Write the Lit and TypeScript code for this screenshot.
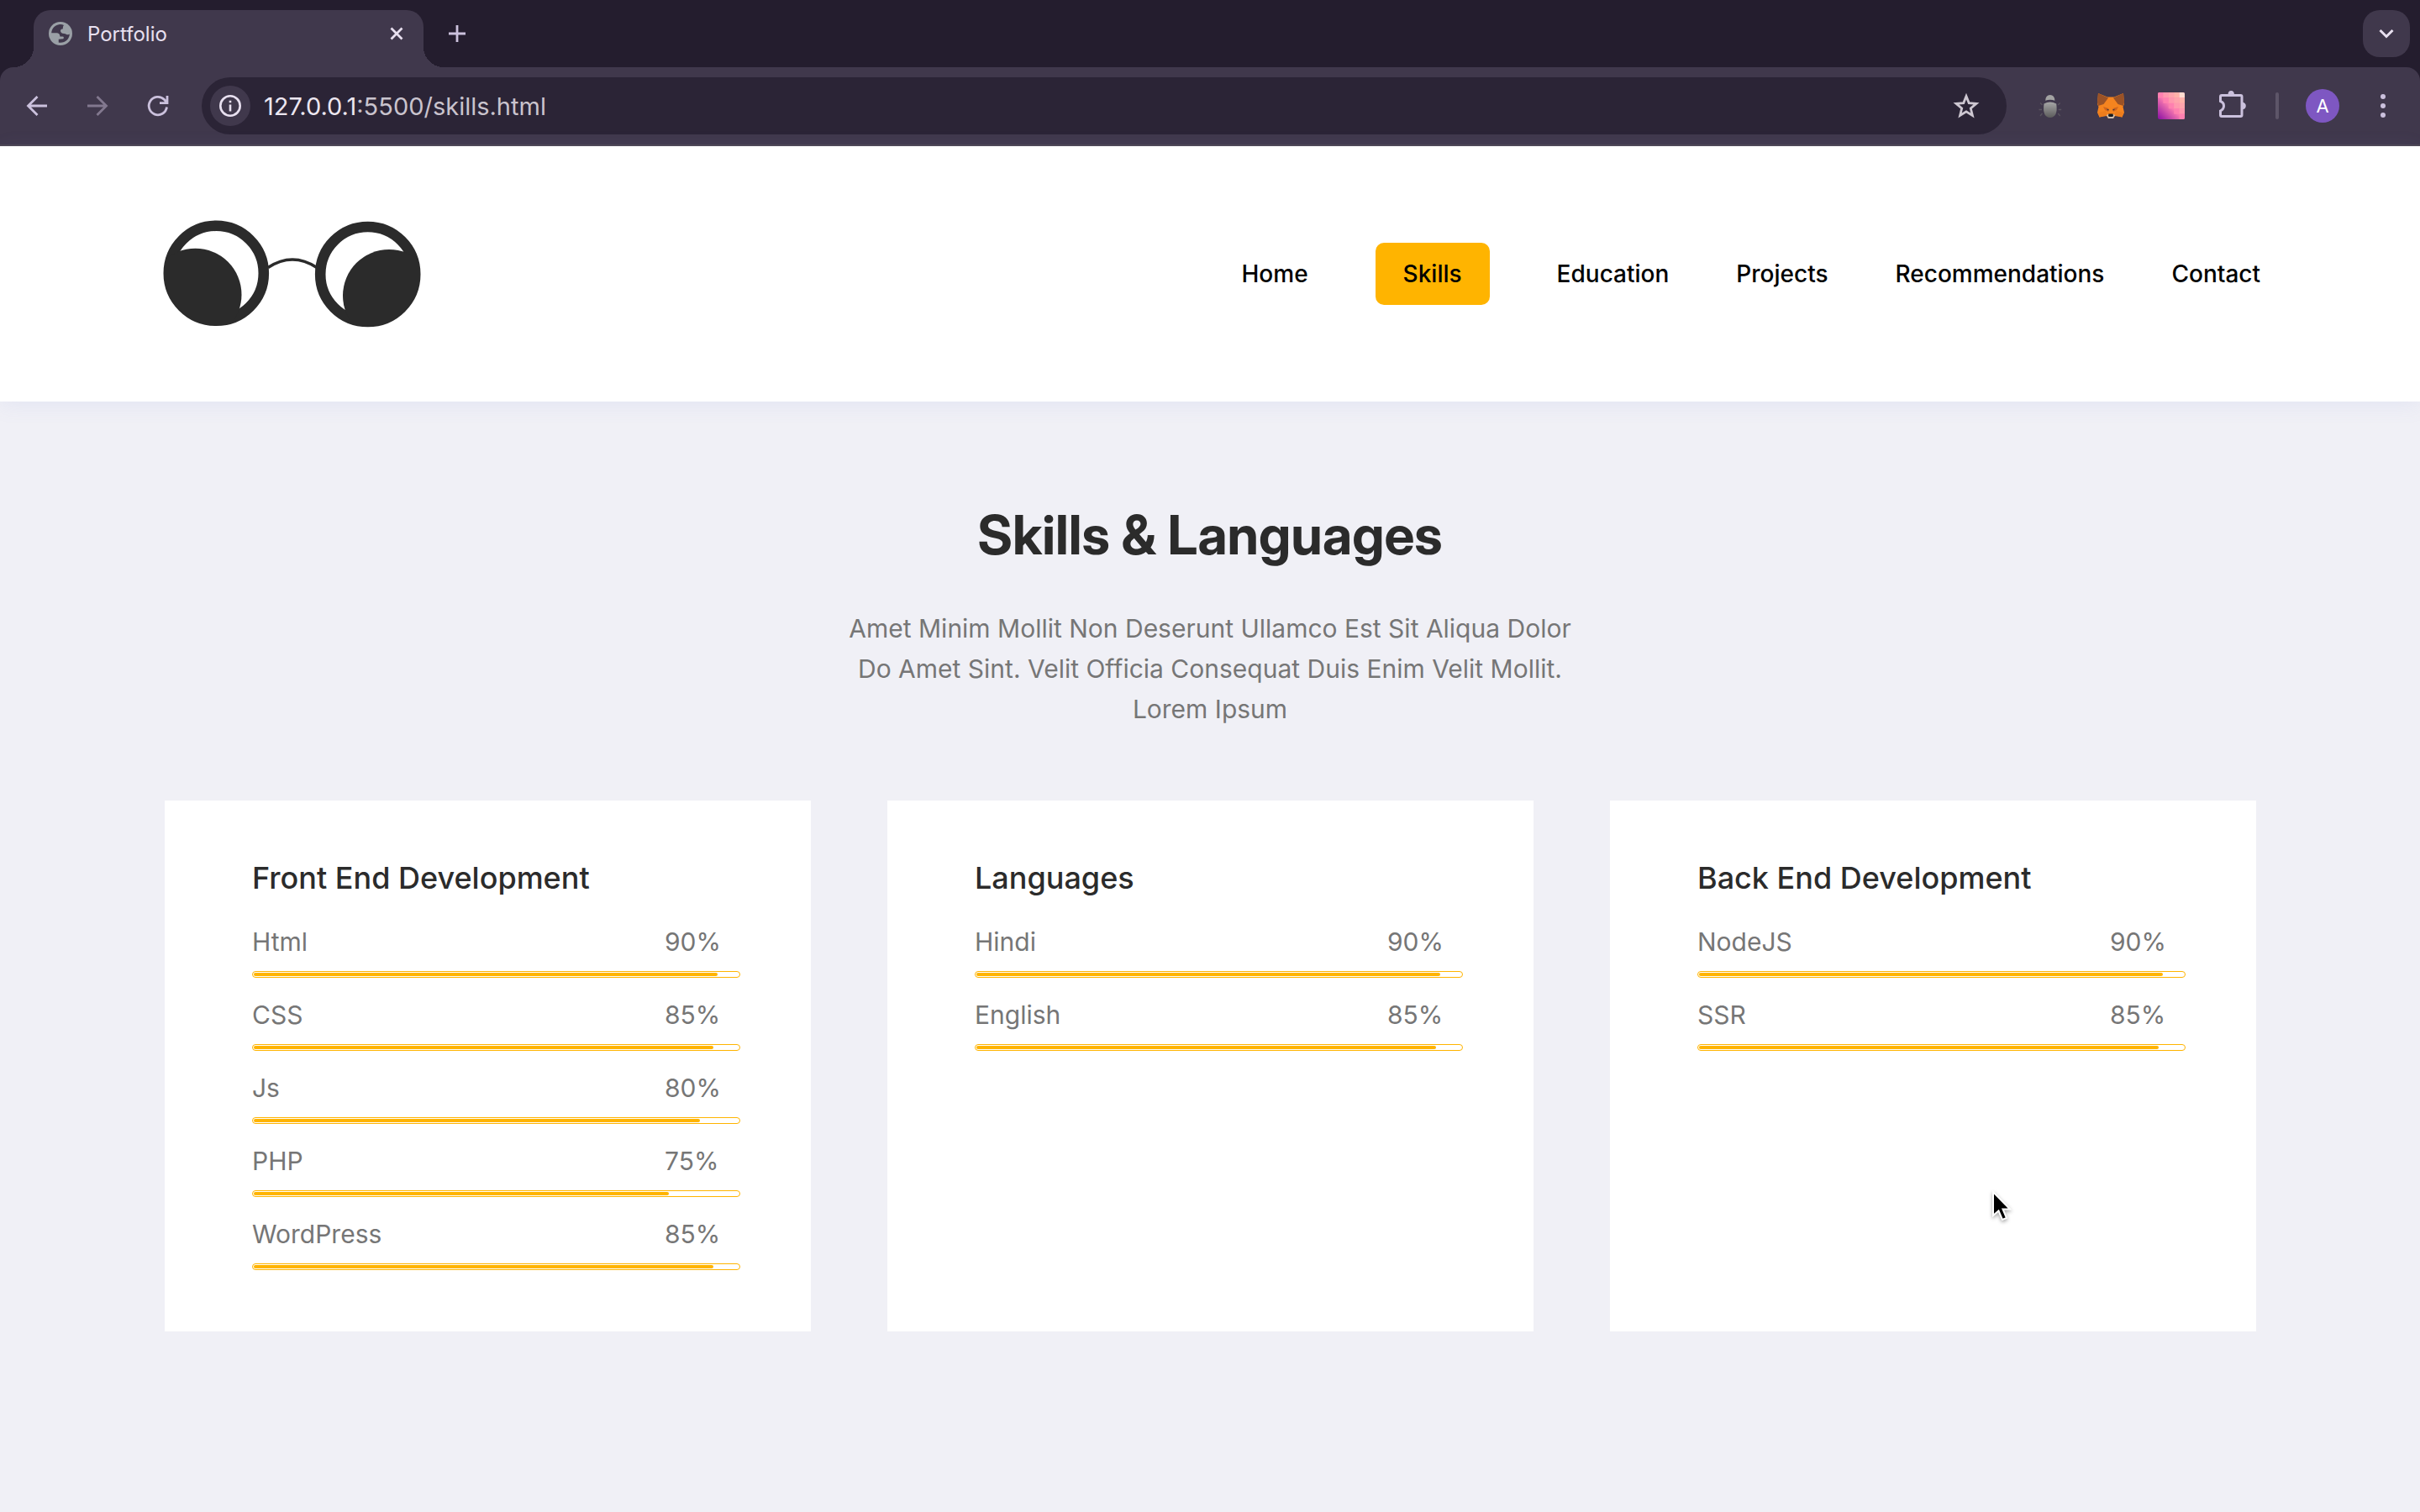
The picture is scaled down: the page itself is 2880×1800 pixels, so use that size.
import { LitElement, html, css, svg } from "lit";
import { customElement, property } from "lit/decorators.js";
import { classMap } from "lit/directives/class-map.js";

interface Skill {
  name: string;
  value: string;
  fill: number;
}

interface SkillGroup {
  title: string;
  skills: Skill[];
}

const NAV = ["Home", "Skills", "Education", "Projects", "Recommendations", "Contact"];

const GROUPS: SkillGroup[] = [
  {
    title: "Front End Development",
    skills: [
      { name: "Html", value: "90%", fill: 95.7 },
      { name: "CSS", value: "85%", fill: 94.8 },
      { name: "Js", value: "80%", fill: 92 },
      { name: "PHP", value: "75%", fill: 85.6 },
      { name: "WordPress", value: "85%", fill: 94.8 },
    ],
  },
  {
    title: "Languages",
    skills: [
      { name: "Hindi", value: "90%", fill: 95.7 },
      { name: "English", value: "85%", fill: 94.8 },
    ],
  },
  {
    title: "Back End Development",
    skills: [
      { name: "NodeJS", value: "90%", fill: 95.7 },
      { name: "SSR", value: "85%", fill: 94.8 },
    ],
  },
];

const globe = svg`
  <circle cx="14" cy="14" r="14" fill="#9aa0a6"/>
  <path fill="#40384c" d="M12 3.2C7 4 3.3 8.300 3.200 13.600L9.500 13.600C12.200 13.600 13.300 15.300 13.300 17.600H16.600C18 17.600 18.300 19.200 17.300 20.200L11.500 20.800V24.500C18.500 26 24.800 21 24.800 14.300C24.300 15.200 23 15.500 21.800 15.300C20.600 15.100 20.200 13.900 18.300 13.900C15.500 13.900 13.800 12.500 14 10.500C14.200 8.700 15.200 8.400 16.800 8.400C16.800 6 17.200 4.600 18 3.900C16.200 3 14 2.800 12 3.200Z"/>
  <path fill="#9aa0a6" d="M3 13.500H9.500C12.200 13.500 13.300 15.300 13.300 17.600H11.500V25H8C4 22 2.500 18 3 13.500Z"/>`;

/* Extension icons on the right of the toolbar. */
const bug = svg`
  <path d="M10.200 9.800Q10.500 3 15.800 3T21.400 9.800Q15.800 7.600 10.200 9.800Z" fill="#a3a3a3"/>
  <path d="M8.500 13.500Q15.800 9.500 23.200 13.500Q25.500 29.500 15.800 30Q6.200 29.500 8.500 13.500Z" fill="url(#bug)"/>
  <path d="M6.500 15L4 12.500M6 20.500H2.500M6.500 25L4 28M25.200 15L27.700 12.500M25.700 20.500H29.200M25.200 25L27.700 28" stroke="#59545f" stroke-width="1.300" fill="none"/>
  <defs><linearGradient id="bug" x1="0" y1="0" x2="0" y2="1"><stop offset="0" stop-color="#a6a6a6"/><stop offset="1" stop-color="#5c5c5c"/></linearGradient></defs>`;

const fox = svg`
  <path d="M1 1L12 5.500H20L31 1L32 14L30.500 17L32 24L29.500 29.500L21 28L19 31H13L11 28L2.500 29.500L0 24L1.500 17L0 14Z" fill="#f5841f"/>
  <path d="M1 1L13 6.500L7.500 14L1 16L0 12Z" fill="#9a5227"/>
  <path d="M31 1L19 6.500L24.500 14L31 16L32 12Z" fill="#9a5227"/>
  <path d="M7 17L13.500 19L13 23L9 21Z M25 17L18.500 19L19 23L23 21Z" fill="#d2661c"/>
  <path d="M10.500 19.500L14 20.500L13 21.800Z M21.500 19.500L18 20.500L19 21.800Z" fill="#3a3440"/>
  <path d="M1 24L10 22L11.500 27L2.500 29.500Z M31 24L22 22L20.500 27L29.500 29.500Z" fill="#ee7d1d"/>
  <path d="M11 27L13 26H19L21 27L19 31H13Z" fill="#cfc0b2"/>
  <path d="M13.500 25.500H18.500L19 28L18 29H14L13 28Z" fill="#1b1b1f"/>`;

const pixels = () => {
  const shades = ["#ff80b0", "#ff98ae", "#ffa4ac", "#ffb2a8", "#ffdccf"];
  const cells = [];
  for (let r = 0; r < 5; r++) {
    for (let c = r; c < 5; c++) {
      cells.push(
        svg`<rect x=${c * 6.4} y=${r * 6.4} width="6.500" height="6.500" fill=${shades[c - r]}/>`,
      );
    }
  }
  return svg`
    <defs>
      <linearGradient id="px" x1="0" y1="1" x2=".5" y2=".5"><stop offset="0" stop-color="#8a0fa3"/><stop offset="1" stop-color="#ff7fb0"/></linearGradient>
      <clipPath id="pxc"><rect width="32" height="32" rx="2"/></clipPath>
    </defs>
    <g clip-path="url(#pxc)"><rect width="32" height="32" fill="url(#px)"/>${cells}</g>`;
};

const puzzle = svg`
  <path d="M4 4.500H26.500Q28 4.500 28 6V28Q28 29.500 26.500 29.500H4Q2.500 29.500 2.500 28V23Q6.500 21 6.500 17T2.500 11.500V6Q2.500 4.500 4 4.500Z" fill="none" stroke="#cbc1dd" stroke-width="3"/>
  <path d="M11.500 4Q11.500 -1 15.200 -1T19 4ZM28 12.500Q32.800 13 32.800 17T28 21.500Z" fill="#cbc1dd"/>`;

@customElement("browser-bar")
export class BrowserBar extends LitElement {
  static styles = css`
    :host {
      display: block;
      font-family: Inter, "Liberation Sans", sans-serif;
      background: #241d2e;
    }
    button {
      border: 0;
      padding: 0;
      background: none;
      color: inherit;
      font: inherit;
      display: grid;
      place-items: center;
      flex: none;
    }
    svg {
      display: block;
      overflow: visible;
    }
    .strip {
      height: 80px;
      box-sizing: border-box;
      padding: 12px 12px 0 40px;
      display: flex;
      align-items: flex-start;
    }
    .tab {
      position: relative;
      width: 464px;
      height: 68px;
      box-sizing: border-box;
      padding: 0 24px 12px 18px;
      border-radius: 20px 20px 0 0;
      background: #40384c;
      display: flex;
      align-items: center;
      gap: 18px;
      color: #e8e0f0;
      font-size: 24px;
    }
    .tab::before,
    .tab::after {
      content: "";
      position: absolute;
      bottom: 0;
      width: 24px;
      height: 24px;
    }
    .tab::before {
      right: 100%;
      background: radial-gradient(circle at 0 0, transparent 24px, #40384c 24px);
    }
    .tab::after {
      left: 100%;
      background: radial-gradient(circle at 100% 0, transparent 24px, #40384c 24px);
    }
    .title {
      flex: 1;
    }
    .plus {
      width: 56px;
      height: 56px;
      margin-left: 12px;
    }
    .more {
      width: 56px;
      height: 56px;
      margin-left: auto;
      border-radius: 20px;
      background: #40384c;
    }
    .toolbar {
      height: 94px;
      box-sizing: border-box;
      padding: 0 32px 0 20px;
      border-bottom: 2px solid #4d4653;
      border-radius: 16px 16px 0 0;
      background: #40384c;
      display: flex;
      align-items: center;
      color: #cbc1dd;
    }
    .nav {
      display: flex;
      gap: 24px;
      margin-right: 28px;
    }
    .nav button {
      width: 48px;
      height: 48px;
    }
    .nav .dim {
      color: #82788f;
    }
    .omnibox {
      flex: 1;
      height: 68px;
      box-sizing: border-box;
      padding: 0 32px 0 10px;
      border-radius: 34px;
      background: #2b2436;
      display: flex;
      align-items: center;
      gap: 16px;
      font-size: 29px;
      color: #c9c3cd;
    }
    .info {
      width: 48px;
      height: 48px;
      border-radius: 24px;
      background: #40384c;
      color: #e8e0f0;
    }
    .url {
      flex: 1;
    }
    .host {
      color: #ece6f0;
    }
    .star {
      color: #cdc7d1;
    }
    .tools {
      display: flex;
      align-items: center;
      gap: 40px;
      margin-left: 36px;
    }
    .rule {
      width: 4px;
      height: 32px;
      margin-left: -6px;
      border-radius: 2px;
      background: #5d5568;
    }
    .avatar {
      width: 40px;
      height: 40px;
      margin-left: -8px;
      border-radius: 20px;
      background: #7e57c2;
      color: #fff;
      font-size: 22px;
    }
  `;

  render() {
    return html`
      <div class="strip">
        <div class="tab">
          <svg width="28" height="28" viewBox="0 0 28 28">${globe}</svg>
          <span class="title">Portfolio</span>
          <button aria-label="Close tab">
            <svg width="16" height="16" viewBox="0 0 16 16"><path d="M1.500 1.500L14.500 14.500M14.500 1.500L1.500 14.500" stroke="#e8e0f0" stroke-width="2.800"/></svg>
          </button>
        </div>
        <button class="plus" aria-label="New tab">
          <svg width="20" height="20" viewBox="0 0 20 20"><path d="M10 0V20M0 10H20" stroke="#cbc1dd" stroke-width="2.800"/></svg>
        </button>
        <button class="more" aria-label="Search tabs">
          <svg width="18" height="10" viewBox="0 0 18 10"><path d="M1.500 1L9 8.500L16.500 1" fill="none" stroke="#e8e0f0" stroke-width="3"/></svg>
        </button>
      </div>
      <div class="toolbar">
        <div class="nav">
          <button aria-label="Back">
            <svg width="24" height="24" viewBox="0 0 24 24"><path d="M24 12H2M12.500 1L1.500 12L12.500 23" fill="none" stroke="currentColor" stroke-width="2.800"/></svg>
          </button>
          <button class="dim" aria-label="Forward">
            <svg width="24" height="24" viewBox="0 0 24 24"><path d="M0 12H22M11.500 1L22.500 12L11.500 23" fill="none" stroke="currentColor" stroke-width="2.800"/></svg>
          </button>
          <button aria-label="Reload">
            <svg width="24" height="24" viewBox="0 0 24 24"><path d="M22.500 13.500A10.700 10.700 0 1 1 19.500 4.500L23 8.500M23 0V8.700H14" fill="none" stroke="currentColor" stroke-width="2.800"/></svg>
          </button>
        </div>
        <div class="omnibox">
          <button class="info" aria-label="Site information">
            <svg width="26" height="26" viewBox="0 0 26 26"><circle cx="13" cy="13" r="11.700" fill="none" stroke="currentColor" stroke-width="2.600"/><path d="M13 11.500V19.500M13 6.700V9.300" stroke="currentColor" stroke-width="2.600"/></svg>
          </button>
          <span class="url"><span class="host">127.0.0.1</span>:5500/skills.html</span>
          <button class="star" aria-label="Bookmark this page">
            <svg width="32" height="32" viewBox="0 0 32 32"><path d="M16 4.500L19.200 12.600L28 13.300L21.300 19L23.400 27.500L16 22.900L8.600 27.500L10.700 19L4 13.300L12.800 12.600Z" fill="none" stroke="currentColor" stroke-width="2.800"/></svg>
          </button>
        </div>
        <div class="tools">
          <button aria-label="Debugger extension"><svg width="32" height="32" viewBox="0 0 32 32">${bug}</svg></button>
          <button aria-label="Wallet extension"><svg width="32" height="32" viewBox="0 0 32 32">${fox}</svg></button>
          <button aria-label="Color extension"><svg width="32" height="32" viewBox="0 0 32 32">${pixels()}</svg></button>
          <button aria-label="Extensions"><svg width="34" height="34" viewBox="0 0 34 34">${puzzle}</svg></button>
          <span class="rule"></span>
          <button class="avatar" aria-label="Profile">A</button>
          <button aria-label="Menu">
            <svg width="24" height="32" viewBox="0 0 24 32" fill="#cbc1dd"><circle cx="12" cy="5" r="3"/><circle cx="12" cy="16" r="3"/><circle cx="12" cy="27" r="3"/></svg>
          </button>
        </div>
      </div>
    `;
  }
}

@customElement("site-header")
export class SiteHeader extends LitElement {
  @property() current = "Skills";

  static styles = css`
    :host {
      display: block;
      position: relative;
    }
    .bar {
      display: flex;
      align-items: center;
      justify-content: space-between;
      box-sizing: border-box;
      height: 304px;
      padding: 0 190px 0 194px;
      background: #fff;
      box-shadow: 0 4px 24px rgba(120, 140, 220, 0.1);
    }
    .logo svg {
      display: block;
    }
    .links {
      display: flex;
      align-items: center;
      gap: 80px;
    }
    .link {
      color: #000;
      font-size: 28px;
      line-height: 34px;
      font-weight: 500;
      text-decoration: none;
    }
    .active {
      padding: 20px 33px;
      border-radius: 10px;
      background: #ffb400;
    }
  `;

  render() {
    return html`
      <header class="bar">
        <a class="logo" href="#home" aria-label="Portfolio">
          <svg width="308" height="128" viewBox="0 0 308 128">
            <defs>
              <clipPath id="l"><circle cx="63.300" cy="63.300" r="62"/></clipPath>
              <clipPath id="r"><circle cx="243.700" cy="64.500" r="62"/></clipPath>
            </defs>
            <g fill="none" stroke="#2b2b2b">
              <circle cx="63.300" cy="63.300" r="56.500" stroke-width="12.600"/>
              <circle cx="243.700" cy="64.500" r="56.500" stroke-width="12.600"/>
              <path d="M125 56.500Q154 37.500 183 56.500" stroke-width="3.600"/>
            </g>
            <circle cx="38.500" cy="88.700" r="55" fill="#2b2b2b" clip-path="url(#l)"/>
            <circle cx="269" cy="90" r="55" fill="#2b2b2b" clip-path="url(#r)"/>
          </svg>
        </a>
        <nav class="links">
          ${NAV.map(
            (name) => html`<a
              class=${classMap({ link: true, active: name === this.current })}
              href="#${name.toLowerCase()}"
              >${name}</a
            >`,
          )}
        </nav>
      </header>
    `;
  }
}

@customElement("skill-card")
export class SkillCard extends LitElement {
  @property({ attribute: false }) group!: SkillGroup;

  static styles = css`
    :host {
      display: block;
      box-sizing: border-box;
      padding: 68px 84px 73px 104px;
      background: #fff;
    }
    .title {
      margin: 0 0 28px;
      color: #2b2b2b;
      font-family: "Inter Variable", Inter, "Liberation Sans", sans-serif;
      font-variation-settings: "opsz" 18;
      font-size: 36px;
      line-height: 48px;
      font-weight: 500;
    }
    .list {
      display: grid;
      gap: 20px;
      margin: 0;
      padding: 0;
      list-style: none;
    }
    .row {
      display: grid;
      grid-template-columns: 1fr 90px;
      color: #767676;
      font-size: 30px;
      line-height: 48px;
    }
    .track {
      box-sizing: border-box;
      height: 8px;
      margin-top: 11px;
      padding: 1px;
      border: 1px solid #ffb400;
      border-radius: 4px;
    }
    .fill {
      height: 4px;
      border-radius: 2px;
      background: #ffb400;
    }
  `;

  render() {
    return html`
      <h2 class="title">${this.group.title}</h2>
      <ul class="list">
        ${this.group.skills.map(
          (s) => html`<li>
            <div class="row"><span>${s.name}</span><span>${s.value}</span></div>
            <div class="track"><div class="fill" style="width: ${s.fill}%"></div></div>
          </li>`,
        )}
      </ul>
    `;
  }
}

@customElement("app-root")
export class AppRoot extends LitElement {
  static styles = css`
    :host {
      display: block;
      position: relative;
      min-height: 100vh;
      background: #f0f0f6;
      font-family: Inter, "Liberation Sans", sans-serif;
    }
    .intro {
      padding: 119px 0 85px;
      text-align: center;
    }
    .heading {
      margin: 0;
      color: #2b2b2b;
      font-family: "Inter Display", "Inter Variable", Inter, "Liberation Sans", sans-serif;
      font-variation-settings: "opsz" 32;
      font-size: 64px;
      line-height: 80px;
      font-weight: 700;
    }
    .lead {
      max-width: 900px;
      margin: 47px auto 0;
      color: #767676;
      font-size: 30px;
      line-height: 48px;
    }
    .cards {
      display: grid;
      grid-template-columns: repeat(3, 1fr);
      gap: 91px;
      padding: 0 195px 0 196px;
    }
    .cursor {
      position: absolute;
      left: 2370px;
      top: 1417px;
      filter: drop-shadow(0 2px 2px rgba(0, 0, 0, 0.35));
    }
  `;

  render() {
    return html`
      <browser-bar></browser-bar>
      <site-header current="Skills"></site-header>
      <main>
        <section class="intro">
          <h1 class="heading">Skills &amp; Languages</h1>
          <p class="lead">
            Amet Minim Mollit Non Deserunt Ullamco Est Sit Aliqua Dolor Do Amet Sint. Velit Officia
            Consequat Duis Enim Velit Mollit. Lorem Ipsum
          </p>
        </section>
        <section class="cards">
          ${GROUPS.map((g) => html`<skill-card .group=${g}></skill-card>`)}
        </section>
      </main>
      <svg class="cursor" width="24" height="38" viewBox="0 0 24 38">
        <path d="M2 2V30L8.500 24.500L13 35L18 33L13.500 22.500H22Z" fill="#000" stroke="#fff" stroke-width="2"/>
      </svg>
    `;
  }
}
